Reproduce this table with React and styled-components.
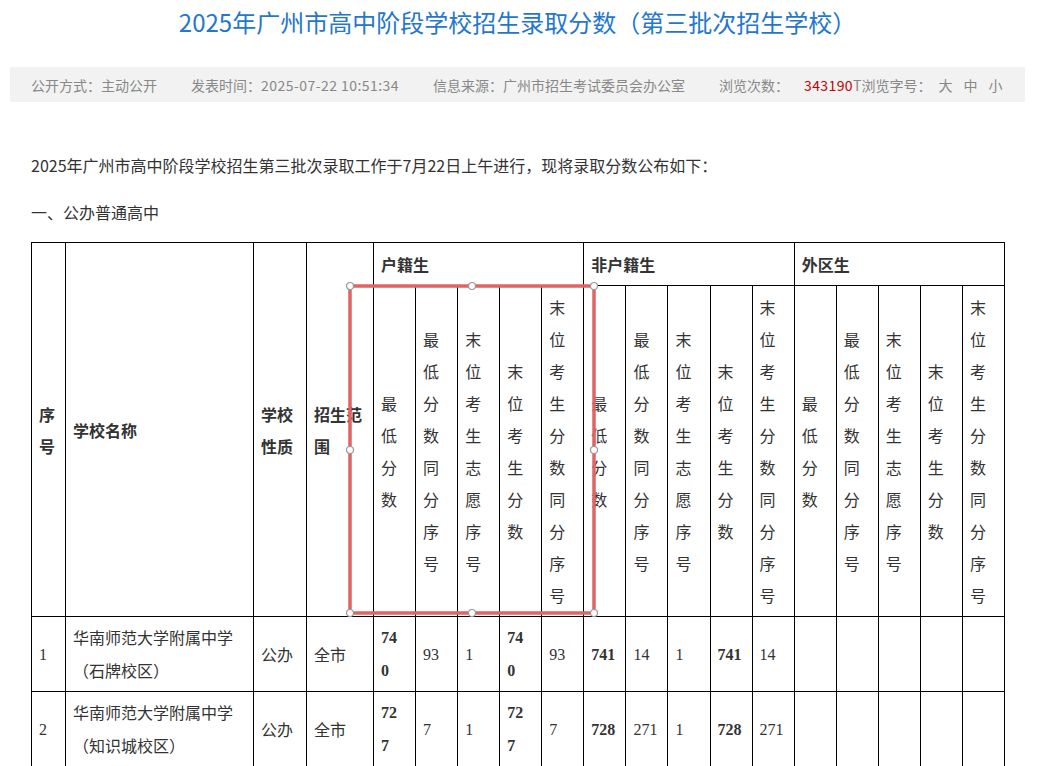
import React from 'react';
import styled, { createGlobalStyle } from 'styled-components';

const GlobalStyle = createGlobalStyle`
	html, body {
		margin: 0;
		padding: 0;
		overflow: hidden;
		background: #fff;
	}
	body {
		font-family: 'Noto Sans CJK SC', 'Liberation Sans', sans-serif;
		color: #333;
	}
`;

const Page = styled.div`
	width: 1015px;
	margin-left: 10px;
	padding-top: 8px;
`;

const Title = styled.h1`
	margin: 0;
	font-size: 24px;
	line-height: 28px;
	font-weight: 400;
	color: #2477cc;
	text-align: center;
`;

const InfoBar = styled.div`
	display: flex;
	align-items: center;
	gap: 34px;
	height: 35px;
	margin-top: 31px;
	padding-left: 21px;
	background: #f2f2f2;
	font-size: 14px;
	color: #888;
`;

const InfoItem = styled.span`
	display: flex;
	align-items: center;
	white-space: nowrap;
`;

const Digits = styled.span`
	letter-spacing: 0.45px;
`;

const Count = styled.span`
	margin-left: 15px;
	color: #c40000;
	letter-spacing: 0.4px;
`;

const SizeOption = styled.span`
	margin-left: ${({ $first }) => ($first ? '7px' : '11px')};
`;

const Article = styled.div`
	padding: 0 20px 0 21px;
`;

const Paragraph = styled.p`
	margin: ${({ $top }) => $top}px 0 0;
	font-size: 16px;
	line-height: 32px;
`;

const TableWrap = styled.div`
	position: relative;
	margin-top: 14px;
	width: 974px;
`;

const Table = styled.table`
	width: 974px;
	border-collapse: collapse;
	table-layout: fixed;
	font-family: 'Liberation Serif', 'Noto Sans CJK SC', serif;
	font-size: 16px;
	color: #333;
`;

const HeadCell = styled.th`
	border: 1px solid #000;
	padding: 5px 7px;
	text-align: left;
	vertical-align: middle;
	font-family: 'Noto Sans CJK SC', sans-serif;
	font-weight: ${({ $bold }) => ($bold ? 700 : 400)};
	line-height: 32px;
	height: ${({ $h }) => ($h ? `${$h}px` : 'auto')};
	box-sizing: border-box;
`;

const Cell = styled.td`
	border: 1px solid #000;
	padding: 4px 7px;
	text-align: left;
	vertical-align: middle;
	line-height: 33px;
	font-weight: ${({ $bold }) => ($bold ? 700 : 400)};
	white-space: pre-line;
	word-break: break-all;
`;

const TextCell = styled(Cell)`
	font-family: 'Noto Sans CJK SC', sans-serif;
`;

const Mark = styled.svg`
	position: absolute;
	left: 316px;
	top: 41px;
	overflow: visible;
`;

const subHeads = [
	'最低分数',
	'最低分数同分序号',
	'末位考生志愿序号',
	'末位考生分数',
	'末位考生分数同分序号',
];

const groups = ['户籍生', '非户籍生', '外区生'];

const rows = [
	{
		no: '1',
		name: '华南师范大学附属中学（石牌校区）',
		type: '公办',
		scope: '全市',
		scores: ['74\n0', '93', '1', '74\n0', '93', '741', '14', '1', '741', '14', '', '', '', '', ''],
	},
	{
		no: '2',
		name: '华南师范大学附属中学（知识城校区）',
		type: '公办',
		scope: '全市',
		scores: ['72\n7', '7', '1', '72\n7', '7', '728', '271', '1', '728', '271', '', '', '', '', ''],
	},
];

// handles on the red selection box
const handles = [
	[3, 3], [125, 3], [247, 3],
	[3, 167], [247, 167],
	[3, 330], [125, 330], [247, 330],
];

const App = () => (
	<>
		<GlobalStyle />
		<Page>
			<Title>2025年广州市高中阶段学校招生录取分数（第三批次招生学校）</Title>
			<InfoBar>
				<InfoItem>公开方式：主动公开</InfoItem>
				<InfoItem>
					发表时间：<Digits>2025-07-22 10:51:34</Digits>
				</InfoItem>
				<InfoItem>信息来源：广州市招生考试委员会办公室</InfoItem>
				<InfoItem>
					浏览次数：<Count>343190</Count>T浏览字号：
					<SizeOption $first>大</SizeOption>
					<SizeOption>中</SizeOption>
					<SizeOption>小</SizeOption>
				</InfoItem>
			</InfoBar>
			<Article>
				<Paragraph $top={47}>
					2025年广州市高中阶段学校招生第三批次录取工作于7月22日上午进行，现将录取分数公布如下：
				</Paragraph>
				<Paragraph $top={15}>一、公办普通高中</Paragraph>
				<TableWrap>
					<Table>
						<colgroup>
							<col style={{ width: 34 }} />
							<col style={{ width: 188 }} />
							<col style={{ width: 53 }} />
							<col style={{ width: 67 }} />
							{Array.from({ length: 15 }).map((_, i) => (
								<col key={i} />
							))}
						</colgroup>
						<thead>
							<tr>
								<HeadCell $bold rowSpan={2}>序号</HeadCell>
								<HeadCell $bold rowSpan={2}>学校名称</HeadCell>
								<HeadCell $bold rowSpan={2}>学校性质</HeadCell>
								<HeadCell $bold rowSpan={2}>招生范围</HeadCell>
								{groups.map((g) => (
									<HeadCell key={g} $bold $h={43} colSpan={5}>
										{g}
									</HeadCell>
								))}
							</tr>
							<tr>
								{groups.map((g) =>
									subHeads.map((s) => <HeadCell key={g + s}>{s}</HeadCell>)
								)}
							</tr>
						</thead>
						<tbody>
							{rows.map((r) => (
								<tr key={r.no}>
									<Cell>{r.no}</Cell>
									<TextCell>{r.name}</TextCell>
									<TextCell>{r.type}</TextCell>
									<TextCell>{r.scope}</TextCell>
									{r.scores.map((v, i) => (
										<Cell key={i} $bold={i % 5 === 0 || i % 5 === 3}>
											{v}
										</Cell>
									))}
								</tr>
							))}
						</tbody>
					</Table>
					<Mark width="250" height="334" viewBox="0 0 250 334">
						<rect x="3" y="3" width="244" height="327" fill="none" stroke="#e06464" strokeWidth="3.5" />
						{handles.map(([cx, cy]) => (
							<circle key={`${cx}-${cy}`} cx={cx} cy={cy} r="3.5" fill="#fff" stroke="#999" strokeWidth="1.2" />
						))}
					</Mark>
				</TableWrap>
			</Article>
		</Page>
	</>
);

export default App;
